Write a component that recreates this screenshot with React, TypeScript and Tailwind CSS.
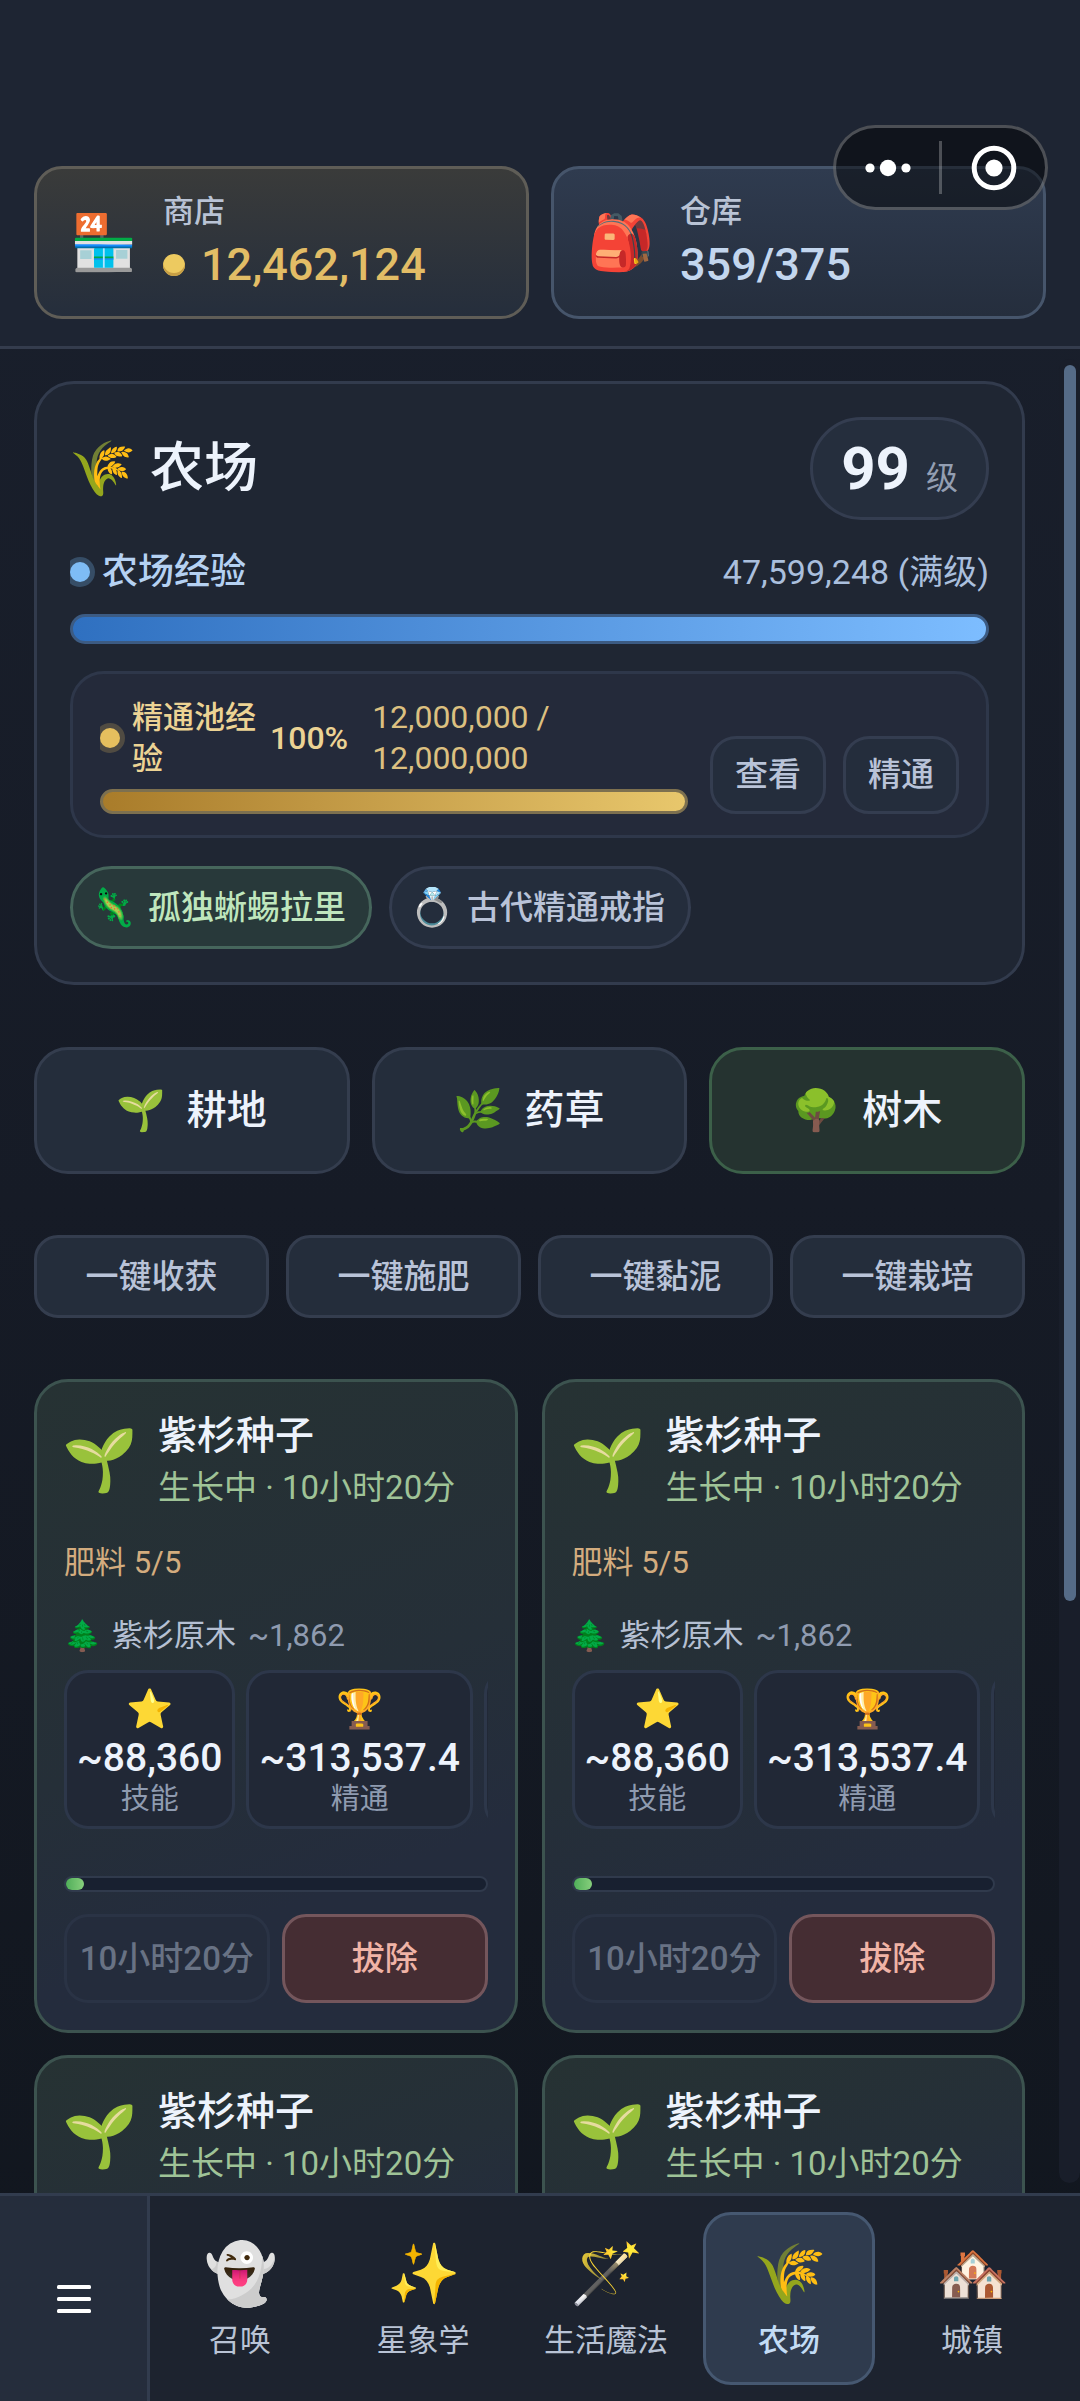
import React from "react";

const FONT = "font-['Roboto','Noto_Sans_CJK_SC',sans-serif]";

function Emoji({ char, className }: { char: string; className: string }) {
  return (
    <span aria-hidden="true" className={"flex shrink-0 items-center justify-center " + className}>
      {char}
    </span>
  );
}

function Capsule() {
  return (
    <div className="absolute top-[125px] right-8 flex h-[85px] w-[215px] items-center rounded-full border-[3px] border-white/25 bg-black/45">
      <button type="button" aria-label="更多" className="flex h-full flex-1 items-center justify-center">
        <svg viewBox="0 0 48 20" className="h-5 w-12" fill="#fff">
          <circle cx="6" cy="10" r="4.6" />
          <circle cx="24" cy="10" r="8.2" />
          <circle cx="42" cy="10" r="4.6" />
        </svg>
      </button>
      <span className="h-[53px] w-[3px] bg-white/25" />
      <button type="button" aria-label="关闭" className="flex h-full flex-1 items-center justify-center">
        <svg viewBox="0 0 48 48" className="size-12">
          <circle cx="24" cy="24" r="19.8" fill="none" stroke="#fff" strokeWidth="5" />
          <circle cx="24" cy="24" r="8.6" fill="#fff" />
        </svg>
      </button>
    </div>
  );
}

function Dot({ tone }: { tone: "blue" | "gold" }) {
  const color = tone === "blue" ? "bg-[#7ebcf5] shadow-[0_0_0_5px_#364d66]" : "bg-[#e6bf5e] shadow-[0_0_0_5px_#504b42]";
  return (
    <span className="flex h-8 w-[26px] shrink-0 items-center overflow-hidden">
      <span className={"size-5 rounded-full " + color} />
    </span>
  );
}

const statBox = "h-[159px] shrink-0 rounded-3xl border-[3px] border-[#2d374a] bg-[#212836]";

function Stat({ icon, value, label }: { icon: string; value: string; label: string }) {
  return (
    <div className={"flex flex-col items-center px-2.5 pt-3.5 " + statBox}>
      <Emoji char={icon} className="h-[44px] text-[38px]" />
      <div className="mt-1 text-[39px] leading-[46px] font-medium text-[#edf3fc]">{value}</div>
      <div className="text-[29px] leading-9 text-[#8f9bb0]">{label}</div>
    </div>
  );
}

function PlotCard({ expanded = false }: { expanded?: boolean }) {
  return (
    <article className="min-h-[300px] min-w-0 rounded-[34px] border-[3px] border-[#3c534f] bg-linear-160 from-[#263233] via-[#252f38] via-50% to-[#242c3d] to-75% p-[27px]">
      <div className="flex items-center gap-[22px]">
        <Emoji char="🌱" className="size-[72px] text-[61px]" />
        <div className="min-w-0">
          <h3 className="text-[39px] leading-[54px] font-medium whitespace-nowrap text-[#edf3fc]">紫杉种子</h3>
          <p className="text-[33px] leading-[50px] whitespace-nowrap text-[#9fc397]">生长中 · 10小时20分</p>
        </div>
      </div>
      {expanded && (
        <>
          <p className="mt-[27px] text-[31px] leading-[46px] text-[#d3ac7e]">肥料 5/5</p>
          <div className="mt-7 flex items-center text-[31px] leading-[44px] whitespace-nowrap">
            <Emoji char="🌲" className="w-9 text-[30px]" />
            <span className="ml-3 text-[#b5c0d3]">紫杉原木</span>
            <span className="ml-3 text-[#8f9bb0]">~1,862</span>
          </div>
          <div className="mt-3 flex gap-[11px] overflow-hidden">
            <Stat icon="⭐" value="~88,360" label="技能" />
            <Stat icon="🏆" value="~313,537.4" label="精通" />
            <div className={"w-[171px] " + statBox} />
          </div>
          <div role="progressbar" aria-label="生长进度" aria-valuenow={4} className="mt-[47px] h-4 rounded-full border-2 border-[#303a4c] bg-[#182030]">
            <div className="h-full rounded-full bg-linear-to-r from-[#4fae5a] to-[#86cf7c]" style={{ width: "4.4%" }} />
          </div>
          <div className="mt-[22px] grid grid-cols-2 gap-3">
            <button type="button" disabled className="h-[89px] rounded-3xl border-[3px] border-[#2a3345] bg-[#242c3c] text-[33px] font-medium whitespace-nowrap text-[#687284]">
              10小时20分
            </button>
            <button type="button" className="h-[89px] rounded-3xl border-[3px] border-[#74565c] bg-[#452d33] text-[33px] font-medium text-[#f0b3a6]">
              拔除
            </button>
          </div>
        </>
      )}
    </article>
  );
}

const navItems = [
  { icon: "👻", label: "召唤" },
  { icon: "✨", label: "星象学" },
  { icon: "🪄", label: "生活魔法" },
  { icon: "🌾", label: "农场", active: true },
  { icon: "🏘️", label: "城镇" },
];

const tabs = [
  { icon: "🌱", label: "耕地" },
  { icon: "🌿", label: "药草" },
  { icon: "🌳", label: "树木", active: true },
];

const quickActions = ["一键收获", "一键施肥", "一键黏泥", "一键栽培"];

const chip = "flex h-[83px] items-center gap-[13px] rounded-full border-[3px] pr-[23px] pl-[18px] text-[33px] font-medium";
const poolButton = "h-[78px] w-[116px] rounded-[26px] border-[3px] border-[#343d50] bg-[#242d3c] text-[33px] font-medium text-[#b9c3d8]";

export default function App() {
  return (
    <div className={"relative flex h-screen flex-col overflow-hidden bg-linear-to-b from-[#1a202d] via-[#161b26] via-50% to-[#11161e] text-[#edf3fc] " + FONT}>
      <header className="grid shrink-0 grid-cols-2 gap-[22px] border-b-[3px] border-[#343c4d] bg-[#1e2533] px-[34px] pt-[166px] pb-[27px]">
        <button type="button" className="flex h-[153px] items-center gap-7 rounded-[28px] border-[3px] border-[#5f5d57] bg-linear-to-b from-[#3a3b3a] to-[#252e3c] pl-[34px] text-left">
          <Emoji char="🏪" className="size-16 text-[54px]" />
          <span className="block pb-1">
            <span className="block text-[31px] leading-[44px] font-medium text-[#b9c3d5]">商店</span>
            <span className="mt-1 flex items-center gap-4 text-[45px] leading-[54px] font-medium text-[#e2bd66]">
              <span className="size-[22px] rounded-full bg-[#edca60] shadow-[inset_0_-3px_0_#c79f45]" />
              12,462,124
            </span>
          </span>
        </button>
        <button type="button" className="flex h-[153px] items-center gap-7 rounded-[28px] border-[3px] border-[#46556b] bg-linear-to-b from-[#2f3b4f] to-[#252e3d] pl-[34px] text-left">
          <Emoji char="🎒" className="size-16 text-[54px]" />
          <span className="block pb-1">
            <span className="block text-[31px] leading-[44px] font-medium text-[#b9c3d5]">仓库</span>
            <span className="mt-1 block text-[45px] leading-[54px] font-medium text-[#c3d6ee]">359/375</span>
          </span>
        </button>
      </header>
      <Capsule />

      <div className="flex min-h-0 flex-1">
        <main className="min-w-0 flex-1 overflow-y-auto px-[34px] pt-8 [scrollbar-width:none]">
          <section className="rounded-[40px] border-[3px] border-[#323b4d] bg-[#1f2633] p-[33px]">
            <div className="flex items-center justify-between">
              <h1 className="flex items-center gap-4 text-[54px] leading-[72px] font-medium">
                <Emoji char="🌾" className="size-16 text-[54px]" />
                农场
              </h1>
              <div className="flex h-[103px] items-baseline gap-4 rounded-full border-[3px] border-[#343d50] bg-[#252e3d] px-7">
                <span className="text-[60px] leading-[97px] font-bold">99</span>
                <span className="text-[32px] text-[#939eb2]">级</span>
              </div>
            </div>
            <div className="mt-[29px] flex h-[46px] items-center justify-between">
              <div className="flex items-center gap-1.5 text-[36px] font-medium text-[#b5d1f2]">
                <Dot tone="blue" />
                农场经验
              </div>
              <div className="text-[34px] text-[#aabfdd]">47,599,248 (满级)</div>
            </div>
            <div role="progressbar" aria-label="农场经验" aria-valuenow={100} className="mt-[19px] h-[30px] rounded-full border-[3px] border-[#3c5b83] bg-linear-to-r from-[#2f70c0] to-[#7dbdff]" />

            <div className="mt-[27px] flex items-end gap-[22px] rounded-[34px] border-[3px] border-[#2e374a] bg-[#242a3a] px-[27px] pt-[23px] pb-[21px]">
              <div className="min-w-0 flex-1">
                <div className="flex items-center text-[31px] leading-[41px] text-[#dcc080]">
                  <Dot tone="gold" />
                  <span className="ml-1.5 w-[124px] font-medium text-[#ecd394]">精通池经验</span>
                  <span className="ml-[14px] text-[32px] font-medium text-[#ecd394]">100%</span>
                  <span className="ml-6 w-[200px] text-[32px]">12,000,000 / 12,000,000</span>
                </div>
                <div role="progressbar" aria-label="精通池经验" aria-valuenow={100} className="mt-2.5 h-[25px] rounded-full border-[3px] border-[#7d704f] bg-linear-to-r from-[#a97c2a] to-[#e8c76c]" />
              </div>
              <div className="flex gap-[17px]">
                <button type="button" className={poolButton}>查看</button>
                <button type="button" className={poolButton}>精通</button>
              </div>
            </div>

            <div className="mt-7 flex gap-[17px]">
              <button type="button" className={chip + " border-[#46665c] bg-[#28393a] text-[#bfe6bd]"}>
                <Emoji char="🦎" className="w-11 text-[37px]" />
                孤独蜥蜴拉里
              </button>
              <button type="button" className={chip + " border-[#343d50] bg-[#242d3c] text-[#b9c3d8]"}>
                <Emoji char="💍" className="w-11 text-[37px]" />
                古代精通戒指
              </button>
            </div>
          </section>

          <div role="tablist" className="mt-[62px] grid grid-cols-3 gap-[22px]">
            {tabs.map((t) => (
              <button
                key={t.label}
                type="button"
                role="tab"
                aria-selected={!!t.active}
                className={"flex h-[127px] items-center justify-center gap-[22px] rounded-[34px] border-[3px] text-[40px] font-medium " + (t.active ? "border-[#3c6049] bg-[#253330]" : "border-[#343d4e] bg-[#242d3b]")}
              >
                <Emoji char={t.icon} className="w-12 text-[40px]" />
                {t.label}
              </button>
            ))}
          </div>

          <div className="mt-[61px] grid grid-cols-4 gap-[17px]">
            {quickActions.map((a) => (
              <button key={a} type="button" className="h-[83px] rounded-[24px] border-[3px] border-[#343d4e] bg-[#242d3b] text-[33px] font-medium text-[#b9c3d8]">
                {a}
              </button>
            ))}
          </div>

          <div className="mt-[61px] grid grid-cols-2 gap-x-6 gap-y-[22px]">
            <PlotCard expanded />
            <PlotCard expanded />
            <PlotCard />
            <PlotCard />
          </div>
        </main>
        <div aria-hidden="true" className="mt-2.5 mb-2.5 flex w-[21px] shrink-0 justify-center rounded-full bg-[#191e2a] pt-1.5">
          <div className="h-[68%] w-3 rounded-full bg-[#556b87]" />
        </div>
      </div>

      <nav className="flex h-[208px] shrink-0 border-t-[3px] border-[#323c4e] bg-[#1d232f]">
        <button type="button" aria-label="菜单" className="flex w-[150px] shrink-0 items-center justify-center border-r-[3px] border-[#323c4e] bg-[#252d3c]">
          <svg viewBox="0 0 34 28" className="h-7 w-[34px]" fill="#fff">
            <rect y="0" width="34" height="4" rx="1.5" />
            <rect y="12" width="34" height="4" rx="1.5" />
            <rect y="24" width="34" height="4" rx="1.5" />
          </svg>
        </button>
        <div className="grid flex-1 grid-cols-5 gap-[11px] py-4 pr-[22px] pl-1">
          {navItems.map((n) => (
            <button
              key={n.label}
              type="button"
              aria-current={n.active ? "page" : undefined}
              className={"flex flex-col items-center rounded-[28px] border-[3px] pt-[22px] text-[31px] whitespace-nowrap " + (n.active ? "border-[#465871] bg-[#2f3b4e] font-medium text-[#c3dcf5]" : "border-transparent text-[#b9c3d5]")}
            >
              <Emoji char={n.icon} className="h-[74px] text-[59px]" />
              <span className="mt-2 leading-[44px]">{n.label}</span>
            </button>
          ))}
        </div>
      </nav>
    </div>
  );
}
